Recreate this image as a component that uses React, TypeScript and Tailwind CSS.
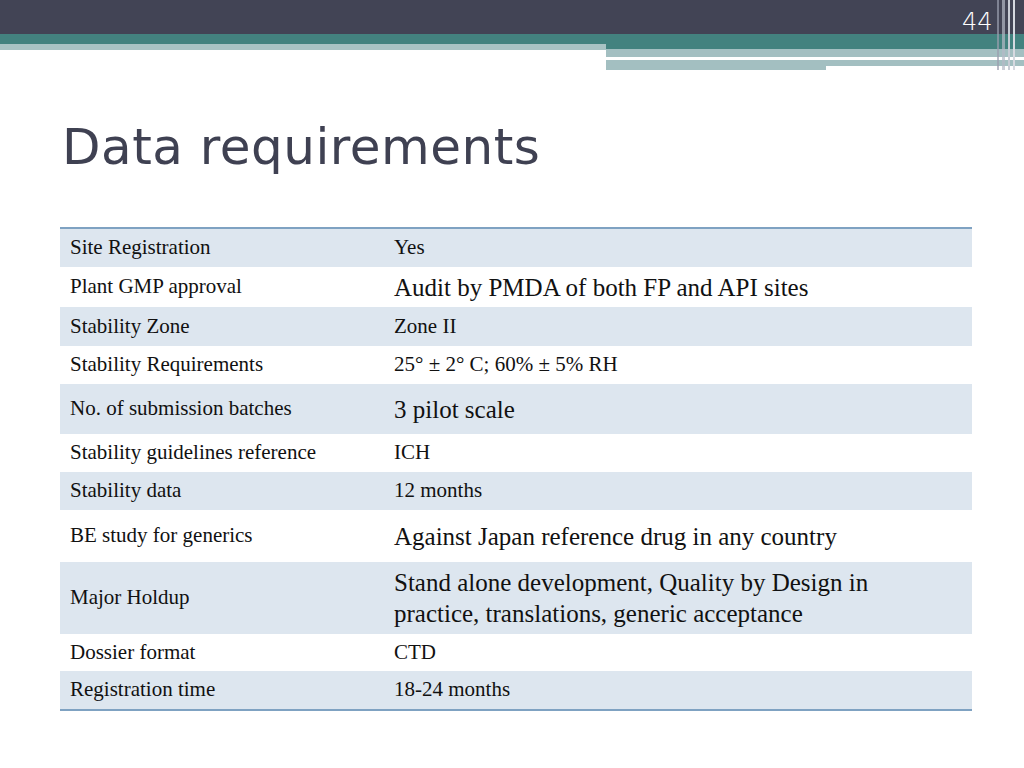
export default function App() {
  const rows: [string, string, string, boolean][] = [
    ["Site Registration", "Yes", "h-[38px]", false],
    ["Plant GMP approval", "Audit by PMDA of both FP and API sites", "h-[40px]", true],
    ["Stability Zone", "Zone II", "h-[39px]", false],
    ["Stability Requirements", "25° ± 2° C; 60% ± 5% RH", "h-[38px]", false],
    ["No. of submission batches", "3 pilot scale", "h-[50px]", true],
    ["Stability guidelines reference", "ICH", "h-[38px]", false],
    ["Stability data", "12 months", "h-[38px]", false],
    ["BE study for generics", "Against Japan reference drug in any country", "h-[52px]", true],
    ["Major Holdup", "Stand alone development, Quality by Design in practice, translations, generic acceptance", "h-[72px]", true],
    ["Dossier format", "CTD", "h-[37px]", false],
    ["Registration time", "18-24 months", "h-[38px]", false],
  ];
  return (
    <div className="w-[1024px] h-[768px] bg-white relative overflow-hidden" style={{ fontFamily: '"Liberation Serif", serif' }}>
      <div className="h-[34px] bg-[#424455]" />
      <div className="flex">
        <div className="w-[606px]">
          <div className="h-[10px] bg-[#43827f]" />
          <div className="h-[6px] bg-[#a9c3c4]" />
        </div>
        <div className="flex-1">
          <div className="h-[15px] bg-[#43827f]" />
          <div className="h-[8px] bg-[#a3bfc1]" />
          <div className="h-[3px] bg-white mr-[76px]" />
          <div className="h-[6px] bg-[#a3bfc1]" />
          <div className="h-[4px] bg-[#a3bfc1] w-[220px]" />
        </div>
      </div>
      <div className="absolute top-0 left-[997px] flex gap-[3px] h-[70px]">
        <div className="w-[2px] bg-[#9a9eae] opacity-70" />
        <div className="w-[3px] bg-[#b5b9c6] opacity-70" />
        <div className="w-[2px] bg-[#c8ccd5]" />
        <div className="w-[2px] bg-[#d6d9e0]" />
      </div>
      <div className="absolute top-[10px] left-[962px] text-[24px] text-white leading-none" style={{ fontFamily: '"DejaVu Sans", sans-serif', fontWeight: 300 }}>44</div>
      <h1 className="mt-[52px] ml-[62px] text-[50px] text-[#3f4152] leading-none tracking-[0.5px]" style={{ fontFamily: '"DejaVu Sans", sans-serif' }}>Data requirements</h1>
      <div className="mt-[55px] mx-[60px] w-[912px] border-t-2 border-b-2 border-[#7fa2c2]">
        {rows.map(([a, b, h, big], i) => (
          <div key={i} className={`flex items-center ${h} ${i % 2 === 0 ? "bg-[#dde6ef]" : "bg-white"}`}>
            <div className="w-[334px] pl-[10px] text-[21px] text-[#111]">{a}</div>
            <div className={`flex-1 pr-4 text-[#111] ${big ? "text-[25px] leading-[31px]" : "text-[21px]"}`}>{b}</div>
          </div>
        ))}
      </div>
    </div>
  );
}
